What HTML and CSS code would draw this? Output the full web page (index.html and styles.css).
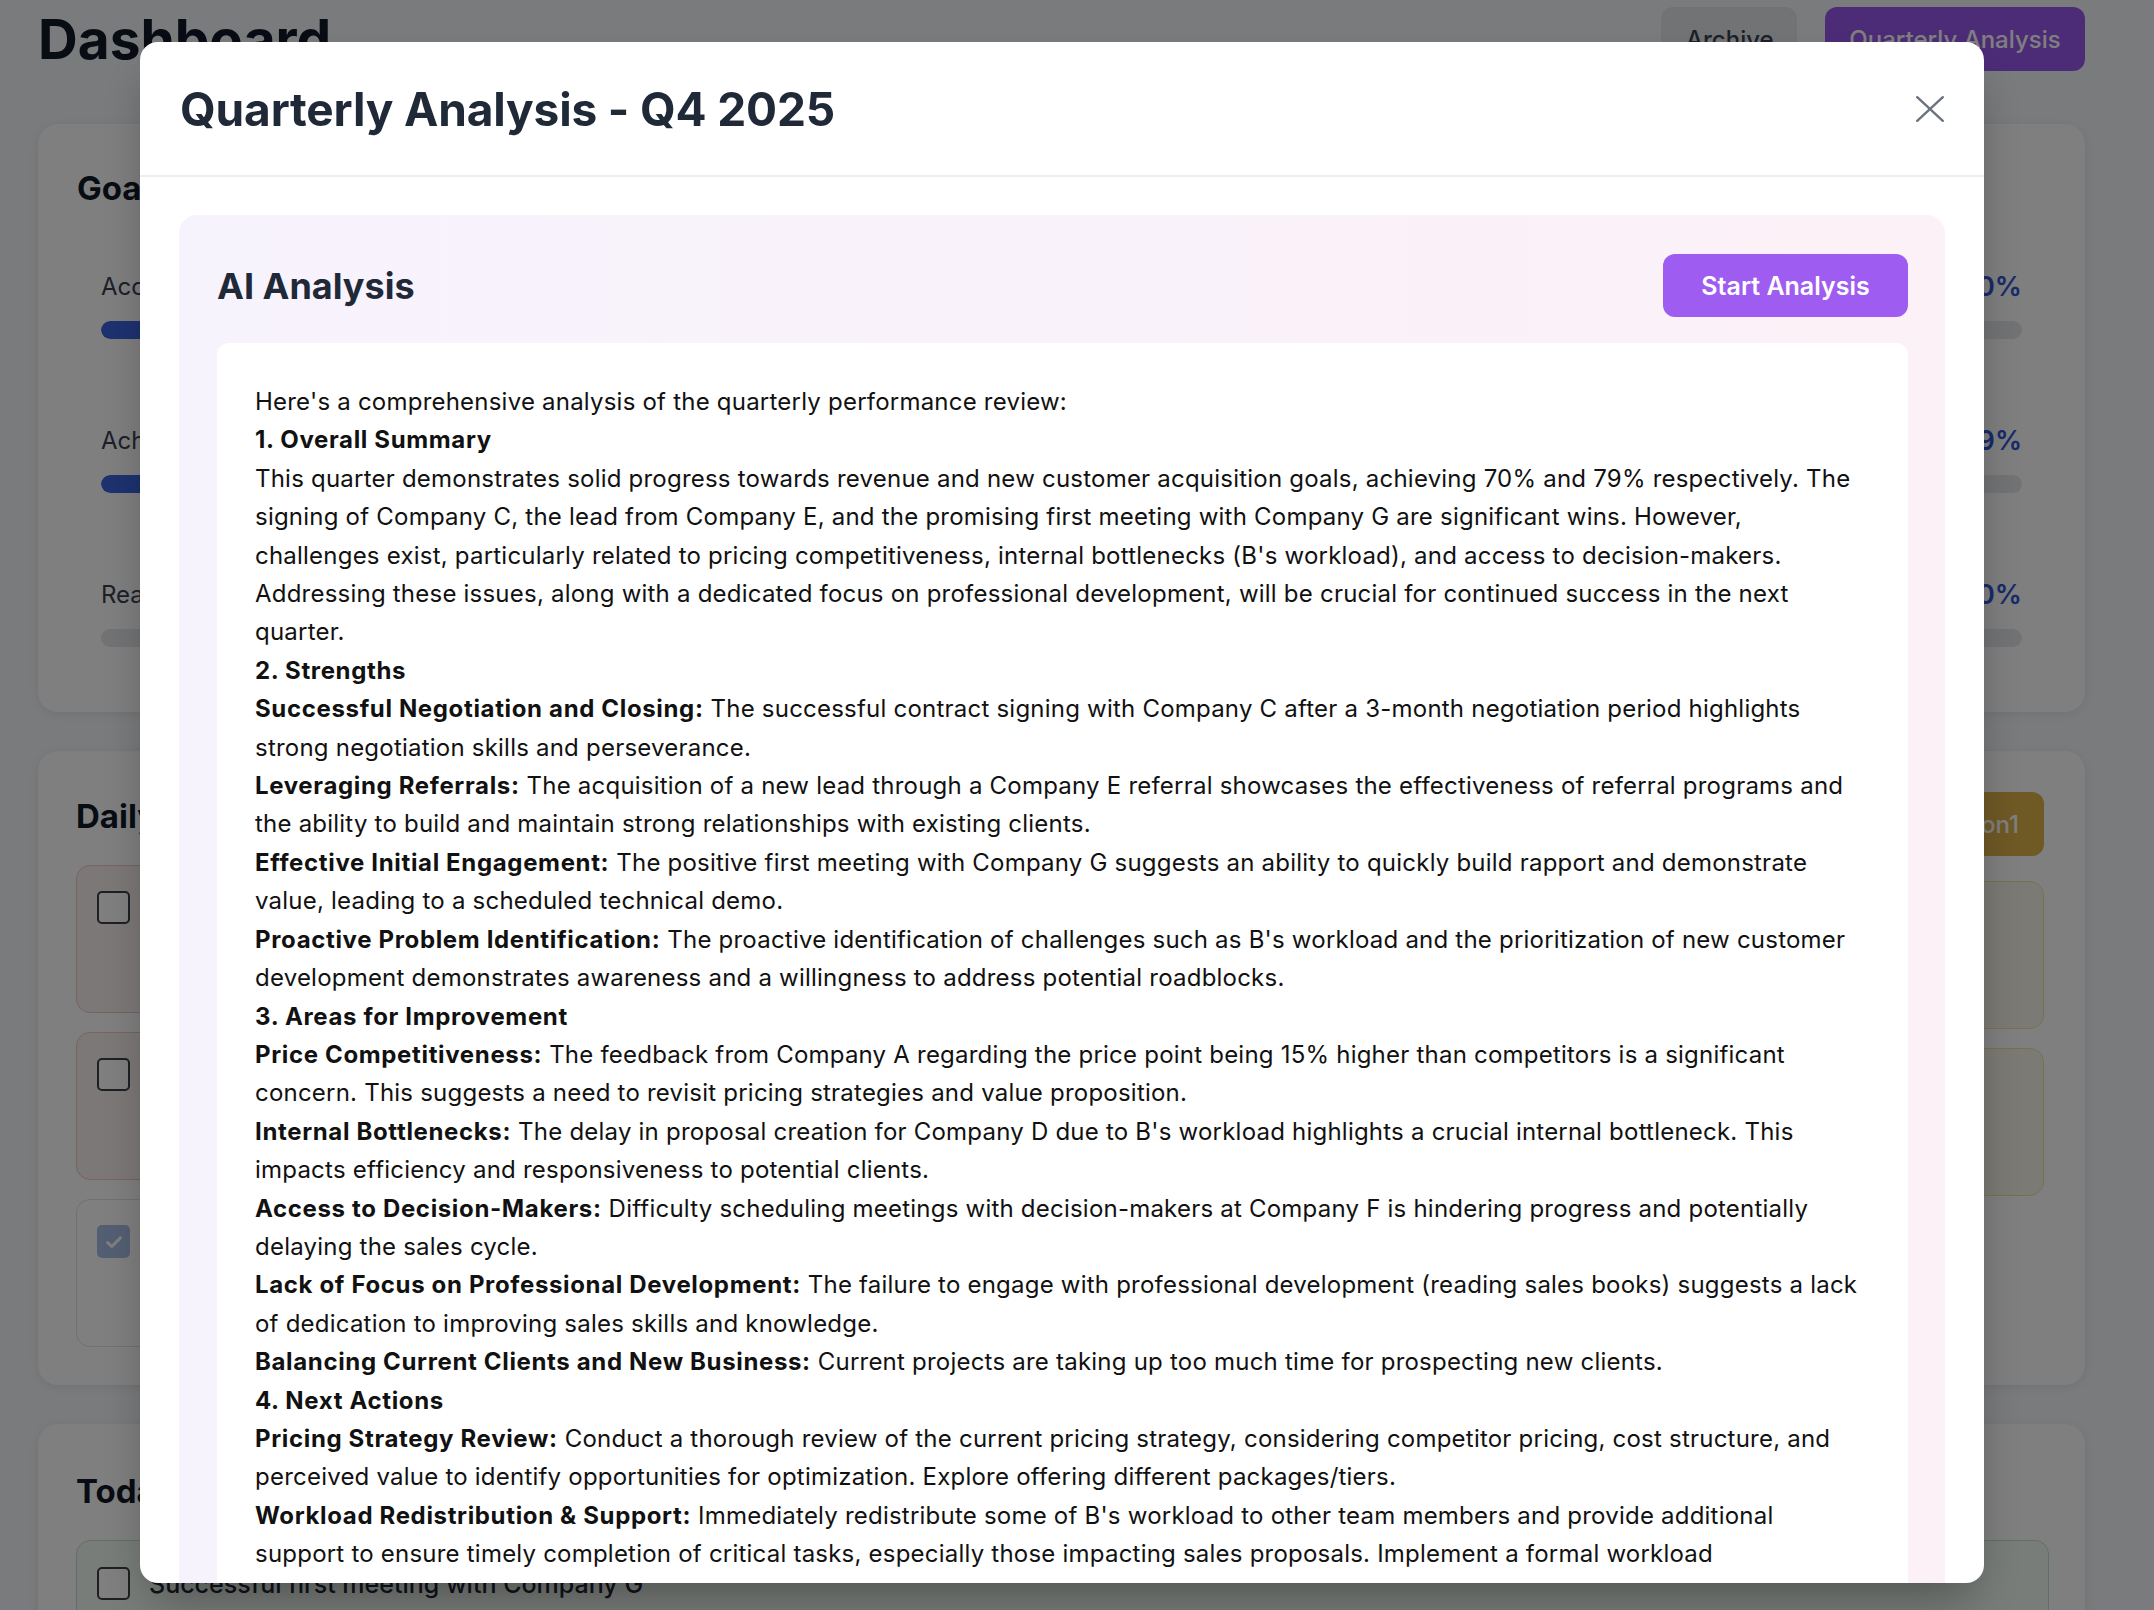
FILE: index.html
```html
<!DOCTYPE html>
<html lang="en">
<head>
<meta charset="utf-8">
<title>Dashboard</title>
<link rel="stylesheet" href="styles.css">
</head>
<body>
<div class="page">
  <header class="topbar">
    <h1 class="page-title">Dashboard</h1>
    <div class="top-actions">
      <button class="btn btn-archive">Archive</button>
      <button class="btn btn-qa">Quarterly Analysis</button>
    </div>
  </header>

  <section class="card goals">
    <h2 class="card-title">Goals Progress</h2>
    <div class="goal-list">
      <div class="goal">
        <div class="goal-head"><span class="goal-label">Accumulated Revenue</span><span class="goal-pct">70%</span></div>
        <div class="bar"><div class="bar-fill" style="width:70%"></div></div>
      </div>
      <div class="goal">
        <div class="goal-head"><span class="goal-label">Achieve New Customers</span><span class="goal-pct">79%</span></div>
        <div class="bar"><div class="bar-fill" style="width:79%"></div></div>
      </div>
      <div class="goal">
        <div class="goal-head"><span class="goal-label">Read Sales Books</span><span class="goal-pct">0%</span></div>
        <div class="bar"><div class="bar-fill" style="width:0%"></div></div>
      </div>
    </div>
  </section>

  <section class="card daily">
    <div class="daily-grid">
      <div class="daily-col">
        <h2 class="card-title">Daily Tasks</h2>
        <div class="task-list">
          <div class="task task-red"><span class="checkbox"></span><span class="task-text">Follow up with Company D proposal</span></div>
          <div class="task task-red"><span class="checkbox"></span><span class="task-text">Schedule meeting with Company F</span></div>
          <div class="task task-done"><span class="checkbox checked"><svg viewBox="0 0 24 24" width="22" height="22"><path d="M5 12.5l4.5 4.5L19 7.5" fill="none" stroke="#fff" stroke-width="3.2" stroke-linecap="round" stroke-linejoin="round"/></svg></span><span class="task-text">Prepare technical demo for Company G</span></div>
        </div>
      </div>
      <div class="daily-col daily-col-right">
        <button class="btn btn-yellow">Add Option1</button>
        <div class="task-list">
          <div class="task task-yellow"><span class="task-text">Option item</span></div>
          <div class="task task-yellow"><span class="task-text">Option item</span></div>
        </div>
      </div>
    </div>
  </section>

  <section class="card today">
    <h2 class="card-title">Today's Wins</h2>
    <div class="win">
      <span class="checkbox"></span>
      <span class="win-text">Successful first meeting with Company G</span>
    </div>
    <div class="win">
      <span class="checkbox"></span>
      <span class="win-text">Received referral lead from Company E</span>
    </div>
  </section>
</div>

<div class="overlay">
  <div class="modal">
    <div class="modal-header">
      <h2 class="modal-title">Quarterly Analysis - Q4 2025</h2>
      <button class="modal-close" aria-label="Close">
        <svg viewBox="0 0 28 26" width="28" height="26"><path d="M1.2 1.2L26.8 24.8M26.8 1.2L1.2 24.8" fill="none" stroke="#6b7280" stroke-width="2.4" stroke-linecap="round"/></svg>
      </button>
    </div>
    <div class="modal-body">
      <div class="ai-panel">
        <div class="ai-head">
          <h3 class="ai-title">AI Analysis</h3>
          <button class="btn btn-start">Start Analysis</button>
        </div>
        <div class="ai-result">
          <p>Here's a comprehensive analysis of the quarterly performance review:</p>
          <p><strong>1. Overall Summary</strong></p>
          <p>This quarter demonstrates solid progress towards revenue and new customer acquisition goals, achieving 70% and 79% respectively. The signing of Company C, the lead from Company E, and the promising first meeting with Company G are significant wins. However, challenges exist, particularly related to pricing competitiveness, internal bottlenecks (B's workload), and access to decision-makers. Addressing these issues, along with a dedicated focus on professional development, will be crucial for continued success in the next quarter.</p>
          <p><strong>2. Strengths</strong></p>
          <p><strong>Successful Negotiation and Closing:</strong> The successful contract signing with Company C after a 3-month negotiation period highlights strong negotiation skills and perseverance.</p>
          <p><strong>Leveraging Referrals:</strong> The acquisition of a new lead through a Company E referral showcases the effectiveness of referral programs and the ability to build and maintain strong relationships with existing clients.</p>
          <p><strong>Effective Initial Engagement:</strong> The positive first meeting with Company G suggests an ability to quickly build rapport and demonstrate value, leading to a scheduled technical demo.</p>
          <p><strong>Proactive Problem Identification:</strong> The proactive identification of challenges such as B's workload and the prioritization of new customer development demonstrates awareness and a willingness to address potential roadblocks.</p>
          <p><strong>3. Areas for Improvement</strong></p>
          <p><strong>Price Competitiveness:</strong> The feedback from Company A regarding the price point being 15% higher than competitors is a significant concern. This suggests a need to revisit pricing strategies and value proposition.</p>
          <p><strong>Internal Bottlenecks:</strong> The delay in proposal creation for Company D due to B's workload highlights a crucial internal bottleneck. This impacts efficiency and responsiveness to potential clients.</p>
          <p><strong>Access to Decision-Makers:</strong> Difficulty scheduling meetings with decision-makers at Company F is hindering progress and potentially delaying the sales cycle.</p>
          <p><strong>Lack of Focus on Professional Development:</strong> The failure to engage with professional development (reading sales books) suggests a lack of dedication to improving sales skills and knowledge.</p>
          <p><strong>Balancing Current Clients and New Business:</strong> Current projects are taking up too much time for prospecting new clients.</p>
          <p><strong>4. Next Actions</strong></p>
          <p><strong>Pricing Strategy Review:</strong> Conduct a thorough review of the current pricing strategy, considering competitor pricing, cost structure, and perceived value to identify opportunities for optimization. Explore offering different packages/tiers.</p>
          <p><strong>Workload Redistribution &amp; Support:</strong> Immediately redistribute some of B's workload to other team members and provide additional support to ensure timely completion of critical tasks, especially those impacting sales proposals. Implement a formal workload</p>
        </div>
      </div>
    </div>
  </div>
</div>
</body>
</html>
```

FILE: styles.css
```css
* { box-sizing: border-box; }

html, body {
  margin: 0;
  padding: 0;
}

body {
  font-family: Inter, "Noto Sans", "Liberation Sans", sans-serif;
  background: #f4f6f9;
  color: #111827;
  overflow: hidden;
}

button {
  font-family: inherit;
  border: 0;
  cursor: pointer;
  white-space: nowrap;
}

.page {
  padding: 7px 69px 60px 38px;
  display: flex;
  flex-direction: column;
  gap: 39px;
}

/* top bar */
.topbar {
  display: flex;
  align-items: center;
  justify-content: space-between;
  height: 64px;
  margin-bottom: 14px;
}

.page-title {
  margin: 0;
  font-size: 55px;
  line-height: 60px;
  font-weight: 700;
  color: #111827;
}

.top-actions {
  display: flex;
  gap: 28px;
}

.btn {
  height: 64px;
  padding: 0 25px;
  border-radius: 12px;
  font-size: 24px;
  font-weight: 500;
}

.btn-archive {
  width: 136px;
  background: #e5e7eb;
  color: #374151;
}

.btn-qa {
  width: 260px;
  padding: 0;
  background: #9a58ef;
  color: #ffffff;
}

/* cards */
.card {
  background: #ffffff;
  border-radius: 20px;
  box-shadow: 0 2px 10px rgba(0, 0, 0, 0.08);
  padding: 40px 39px;
}

.card-title {
  margin: 0;
  font-size: 33px;
  line-height: 48px;
  font-weight: 700;
  color: #111827;
}

/* goals */
.goals {
  padding-bottom: 44px;
}

.goal-list {
  display: flex;
  flex-direction: column;
  gap: 42px;
  margin-top: 36px;
  padding: 0 24px;
}

.goal {
  padding: 20px 0 21px;
}

.goal-head {
  display: flex;
  justify-content: space-between;
  align-items: center;
  height: 36px;
}

.goal-label {
  font-size: 24px;
  color: #374151;
}

.goal-pct {
  font-size: 27px;
  font-weight: 600;
  color: #2f55d4;
}

.bar {
  margin-top: 17px;
  height: 18px;
  border-radius: 9px;
  background: #e5e7eb;
  overflow: hidden;
}

.bar-fill {
  height: 100%;
  background: #3b64e0;
  border-radius: 9px;
}

/* daily */
.daily {
  padding: 41px 41px 38px 38px;
}

.daily-grid {
  display: grid;
  grid-template-columns: 1fr 1fr;
  gap: 38px;
}

.daily-col {
  display: flex;
  flex-direction: column;
  gap: 25px;
}

.daily-col-right {
  align-items: flex-end;
  gap: 25px;
}

.btn-yellow {
  background: #deb24a;
  color: #ffffff;
  width: 240px;
  text-align: right;
}

.task-list {
  display: flex;
  flex-direction: column;
  gap: 19px;
  align-self: stretch;
}

.task {
  height: 148px;
  border-radius: 14px;
  border: 1.5px solid #e5e7eb;
  padding: 25px 20px;
  display: flex;
  gap: 19px;
  align-items: flex-start;
}

.task-red {
  background: #fbf1f1;
  border-color: #f2c4c4;
}

.task-done {
  background: #ffffff;
  border-color: #eadede;
}

.task-done .task-text {
  opacity: 0.5;
}

.task-yellow {
  background: linear-gradient(to right, #f1f0de, #f9f4ea);
  border-color: #efe0a0;
}

.task-text {
  font-size: 24px;
  line-height: 33px;
  color: #1f2937;
}

.checkbox {
  flex: none;
  width: 33px;
  height: 33px;
  border: 2.5px solid #3b3f46;
  border-radius: 5px;
  background: #ffffff;
  display: flex;
  align-items: center;
  justify-content: center;
}

.checkbox.checked {
  background: #a9bde6;
  border-color: #a9bde6;
}

/* today */
.today {
  padding: 43px 38px 40px 38px;
  display: flex;
  flex-direction: column;
  gap: 25px;
}

.win {
  border: 1.5px solid #bfe3c8;
  background: #f2fbf4;
  border-radius: 14px;
  padding: 26px 20px;
  display: flex;
  align-items: center;
  gap: 19px;
  margin-right: -2px;
}

.win-text {
  font-size: 25px;
  font-weight: 500;
  color: #1f2937;
}

/* overlay + modal */
.overlay {
  position: fixed;
  inset: 0;
  background: rgba(0, 0, 0, 0.5);
  display: flex;
  justify-content: center;
  align-items: flex-start;
  padding: 42px 30px 0 0;
}

.modal {
  width: 1844px;
  height: 1541px;
  background: #ffffff;
  border-radius: 18px;
  box-shadow: 0 25px 50px -12px rgba(0, 0, 0, 0.35);
  display: flex;
  flex-direction: column;
  overflow: hidden;
}

.modal-header {
  flex: none;
  height: 135px;
  display: flex;
  align-items: center;
  justify-content: space-between;
  padding: 0 40px;
  border-bottom: 2px solid #eceef1;
}

.modal-title {
  margin: 0;
  font-size: 46px;
  font-weight: 700;
  color: #1f2937;
  letter-spacing: -0.15px;
}

.modal-close {
  background: transparent;
  padding: 0;
  width: 28px;
  height: 26px;
  display: flex;
}

.modal-body {
  flex: 1;
  overflow: hidden;
  padding: 38px 39px 0 39px;
}

.ai-panel {
  background: linear-gradient(to right, #f7f3fd, #fcf1f7);
  border-radius: 18px;
  padding: 39px 37px 38px 38px;
}

.ai-head {
  display: flex;
  align-items: center;
  justify-content: space-between;
  margin-bottom: 26px;
}

.ai-title {
  margin: 0;
  font-size: 36px;
  font-weight: 700;
  color: #1f2937;
}

.btn-start {
  width: 245px;
  height: 63px;
  padding: 0;
  background: #9f5cf0;
  color: #ffffff;
  font-size: 25px;
  font-weight: 600;
  border-radius: 12px;
}

.ai-result {
  background: #ffffff;
  border-radius: 12px;
  padding: 40px 45px 40px 38px;
  font-size: 24px;
  line-height: 38.4px;
  letter-spacing: 0.22px;
  color: #111111;
}

.ai-result p {
  margin: 0;
}

.ai-result strong {
  font-weight: 700;
  letter-spacing: 0.65px;
}
```
